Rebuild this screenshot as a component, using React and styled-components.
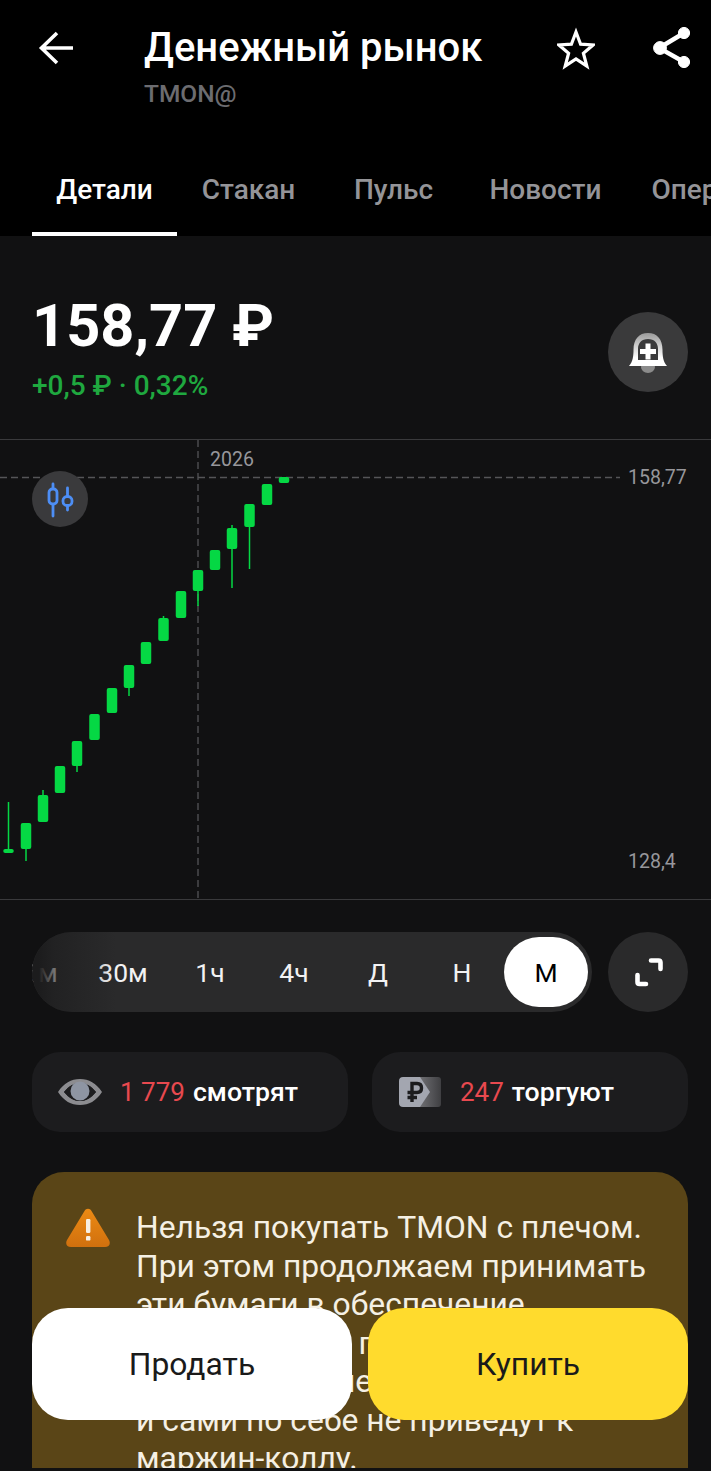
import React from 'react';
import styled, { createGlobalStyle } from 'styled-components';

const GlobalStyle = createGlobalStyle`
  html, body {
    margin: 0;
    padding: 0;
    background: #111112;
  }
  * {
    box-sizing: border-box;
  }
`;

const Root = styled.div`
  position: relative;
  width: 711px;
  height: 1471px;
  overflow: hidden;
  background: #111112;
  color: #fff;
  font-family: Roboto, 'Noto Sans', sans-serif;
`;

const Scroll = styled.div`
  height: 1468px;
  overflow: hidden;
`;

const Header = styled.header`
  height: 236px;
  background: #000;
  display: flex;
  flex-direction: column;
  justify-content: space-between;
`;

const TopBar = styled.div`
  display: flex;
  padding: 26px 20px 0 0;
`;

const BackButton = styled.div`
  width: 144px;
  height: 44px;
  flex-shrink: 0;
  svg {
    display: block;
    margin-left: 38px;
  }
`;

const TitleBlock = styled.div`
  flex: 1;
`;

const Title = styled.h1`
  margin: 0;
  font-size: 40px;
  line-height: 44px;
  font-weight: 500;
  white-space: nowrap;
`;

const Ticker = styled.div`
  margin-top: 8px;
  font-size: 24.5px;
  line-height: 32px;
  font-weight: 500;
  color: #6c6c70;
`;

const Actions = styled.div`
  display: flex;
  gap: 58px;
  align-items: flex-start;
`;

const Tabs = styled.nav`
  display: flex;
  padding-left: 32px;
  overflow: hidden;
`;

const Tab = styled.div`
  flex-shrink: 0;
  width: ${({ $width }) => $width}px;
  height: 90px;
  display: flex;
  align-items: center;
  justify-content: center;
  font-size: 28px;
  font-weight: 500;
  color: ${({ $active }) => ($active ? '#fff' : '#949498')};
  border-bottom: 4px solid ${({ $active }) => ($active ? '#fff' : 'transparent')};
`;

const PriceRow = styled.section`
  height: 203px;
  padding: 58px 23px 0 32px;
  display: flex;
  justify-content: space-between;
  align-items: flex-start;
`;

const Price = styled.div`
  font-size: 59.5px;
  line-height: 64px;
  font-weight: 700;
  white-space: nowrap;
`;

const Delta = styled.div`
  margin-top: 10px;
  font-size: 28px;
  line-height: 36px;
  font-weight: 500;
  color: #1fa83f;
  white-space: nowrap;
`;

const RoundButton = styled.div`
  width: ${({ $size }) => $size || 80}px;
  height: ${({ $size }) => $size || 80}px;
  border-radius: 50%;
  flex-shrink: 0;
  background: ${({ $bg }) => $bg || '#2a2a2b'};
  display: flex;
  align-items: center;
  justify-content: center;
`;

const BellSlot = styled.div`
  margin-top: 18px;
`;

const Chart = styled.section`
  position: relative;
  height: 461px;
  border-top: 1px solid #3a3a3c;
  border-bottom: 1px solid #3a3a3c;
  svg {
    display: block;
  }
`;

const ChartLabel = styled.div`
  position: absolute;
  left: ${({ $x }) => $x}px;
  top: ${({ $y }) => $y}px;
  font-size: 19.5px;
  line-height: 24px;
  color: #97979b;
`;

const ChartToggle = styled.div`
  position: absolute;
  left: 32px;
  top: 31px;
`;

const PeriodRow = styled.div`
  display: flex;
  gap: 16px;
  margin: 32px 23px 0 32px;
`;

const PeriodBar = styled.div`
  position: relative;
  flex: 1;
  height: 80px;
  padding: 5px 4px;
  border-radius: 40px;
  background: #2a2a2b;
  display: flex;
  justify-content: flex-end;
  overflow: hidden;
  &::before {
    content: '';
    position: absolute;
    left: 0;
    top: 0;
    bottom: 0;
    width: 84px;
    background: linear-gradient(
      90deg,
      #1c1c1d 8%,
      rgba(28, 28, 29, 0.6) 26%,
      rgba(42, 42, 43, 0)
    );
  }
`;

const Period = styled.div`
  flex-shrink: 0;
  width: ${({ $width }) => $width || 84}px;
  height: 70px;
  border-radius: 35px;
  display: flex;
  align-items: center;
  justify-content: center;
  font-size: 26.5px;
  color: ${({ $active }) => ($active ? '#000' : '#f2f2f3')};
  background: ${({ $active }) => ($active ? '#fff' : 'transparent')};
`;

const Stats = styled.div`
  display: grid;
  grid-template-columns: 316px 316px;
  gap: 24px;
  margin: 40px 0 0 32px;
`;

const Stat = styled.div`
  height: 80px;
  border-radius: 28px;
  background: #1c1c1e;
  display: flex;
  align-items: center;
  padding-left: ${({ $pad }) => $pad}px;
  gap: ${({ $gap }) => $gap}px;
  font-size: 26.7px;
  font-weight: 500;
  white-space: nowrap;
`;

const StatValue = styled.span`
  font-size: 26px;
  font-weight: 400;
  color: #e8494f;
  margin-right: 8px;
`;

const Warning = styled.div`
  margin: 40px 23px 0 32px;
  height: 400px;
  border-radius: 32px;
  background: #5a4517;
  padding: 36px 0 0 34px;
  display: flex;
  gap: 26px;
  align-items: flex-start;
`;

const WarningText = styled.p`
  margin: 0;
  font-size: 31.8px;
  line-height: 38.5px;
  color: #f5f0e4;
  white-space: nowrap;
`;

const Footer = styled.div`
  position: absolute;
  left: 32px;
  top: 1308px;
  width: 656px;
  display: grid;
  grid-template-columns: 320px 320px;
  gap: 16px;
`;

const TradeButton = styled.div`
  height: 112px;
  border-radius: 36px;
  background: ${({ $bg }) => $bg};
  color: #1a1a1a;
  display: flex;
  align-items: center;
  justify-content: center;
  font-size: 31.8px;
`;

// x, open/close top and bottom, wick top and bottom (page coords)
const candles = [
  [8.5, 849, 853, 802, 853],
  [26, 823, 849, 823, 861],
  [43, 795, 822, 790, 822],
  [60, 766, 793, 766, 793],
  [77, 741, 766, 741, 772],
  [94.5, 714, 740, 714, 740],
  [112, 688, 713, 688, 713],
  [129, 665, 688, 665, 696],
  [146, 642, 664, 642, 664],
  [163.5, 618, 641, 616, 641],
  [181, 591, 618, 591, 618],
  [198, 570, 591, 570, 606],
  [215, 550, 570, 550, 570],
  [232, 528, 549, 525, 588],
  [249.5, 504, 527, 504, 569],
  [267, 484, 505, 484, 505],
  [284, 477, 483, 477, 483],
];

const CHART_TOP = 440;

const CandleChart = () => (
  <svg width="711" height="459" viewBox={`0 ${CHART_TOP} 711 459`}>
    <line x1="0" x2="620" y1="477.5" y2="477.5" stroke="#555557" strokeWidth="1.3" strokeDasharray="7 4" />
    <line x1="198" x2="198" y1="440" y2="899" stroke="#555557" strokeWidth="1.3" strokeDasharray="7 4" />
    {candles.map(([x, top, bottom, wickTop, wickBottom]) => (
      <g key={x} fill="#05d844">
        <rect x={x - 0.75} y={wickTop} width="1.5" height={wickBottom - wickTop} />
        <rect x={x - 5.25} y={top} width="10.5" height={bottom - top} rx="2" />
      </g>
    ))}
  </svg>
);

const ArrowIcon = () => (
  <svg width="38" height="44" viewBox="0 0 38 44" fill="none" stroke="#fff" strokeWidth="3.6">
    <path d="M3 22H35M19 7L3.5 22L19 37" />
  </svg>
);

const StarIcon = () => (
  <svg width="38" height="44" viewBox="0 0 38 44" fill="none" stroke="#fff" strokeWidth="3.2">
    <path d="M19 6L23.6 18.2L36 19L26.4 27.2L29.8 40L19 32.8L8.2 40L11.6 27.2L2 19L14.4 18.2Z" />
  </svg>
);

const ShareIcon = () => (
  <svg width="38" height="44" viewBox="0 0 38 44" fill="#fff" stroke="#fff">
    <path d="M31 7L6 22L31 36" fill="none" strokeWidth="4.4" />
    <circle cx="31" cy="7" r="5.6" />
    <circle cx="7" cy="22" r="6.4" />
    <circle cx="31" cy="36" r="5.6" />
  </svg>
);

const BellIcon = () => (
  <svg width="80" height="80" viewBox="0 0 80 80">
    <defs>
      <linearGradient id="bell" x1="0" y1="0" x2="0" y2="1">
        <stop offset="0" stopColor="#9a9a9a" />
        <stop offset="0.75" stopColor="#fff" />
      </linearGradient>
    </defs>
    <ellipse cx="40" cy="55" rx="7" ry="6" fill="#8b8b8b" />
    <path
      fillRule="evenodd"
      fill="url(#bell)"
      d="M21 54C25 50 25.500 43 25.500 38C25.500 27 31 21 40 21C49 21 54.500 27 54.500 38C54.500 43 55 50 59 54ZM30 48H50V37C50 31 46.500 27 40 27C33.500 27 30 31 30 37Z"
    />
    <path fill="#fff" d="M37.500 31.500H42.500V37H48V42H42.500V47.500H37.500V42H32V37H37.500Z" />
  </svg>
);

const CandlesIcon = () => (
  <svg width="56" height="56" viewBox="0 0 56 56" fill="#3a3a3c" stroke="#4d8ef5" strokeWidth="2.8" strokeLinecap="round">
    <path d="M21 13V45M35.500 17V39" />
    <rect x="17" y="18" width="8" height="15" rx="3.500" />
    <rect x="31" y="25.500" width="9" height="9" rx="4" />
  </svg>
);

const ExpandIcon = () => (
  <svg width="80" height="80" viewBox="0 0 80 80" fill="none" stroke="#fff" strokeWidth="4.6" strokeLinecap="round" strokeLinejoin="round">
    <path d="M43 28.500H50.500C52 28.500 52.500 29 52.500 30.500V37" />
    <path d="M29.500 43V50C29.500 51.500 30 52 31.500 52H38" />
  </svg>
);

const EyeIcon = () => (
  <svg width="44" height="28" viewBox="0 0 44 28">
    <path
      fill="#8c8c90"
      fillRule="evenodd"
      d="M0 14C6 5 13 1 22 1C31 1 38 5 44 14C38 23 31 27 22 27C13 27 6 23 0 14ZM6 14C11 20 16 23 22 23C28 23 33 20 38 14C33 8 28 5 22 5C16 5 11 8 6 14Z"
    />
    <path fill="#1c1c1e" d="M6 14C11 8 16 5 22 5C28 5 33 8 38 14C33 20 28 23 22 23C16 23 11 20 6 14Z" />
    <circle cx="22" cy="13" r="9.500" fill="#8e95a3" />
  </svg>
);

const TraderIcon = () => (
  <svg width="42" height="30" viewBox="0 0 42 30">
    <defs>
      <linearGradient id="trader" x1="0" y1="0" x2="1" y2="0">
        <stop offset="0" stopColor="#7a7a7e" />
        <stop offset="1" stopColor="#3f3f42" />
      </linearGradient>
    </defs>
    <path fill="url(#trader)" d="M16 0H39C41 0 42 1 42 3V27C42 29 41 30 39 30H16Z" />
    <path fill="#a3a6b0" d="M4 0H21L31 15L21 30H4C1.500 30 0 28.500 0 26V4C0 1.500 1.500 0 4 0Z" />
    <path
      fill="none"
      stroke="#1c1c1e"
      strokeWidth="3.4"
      d="M13 25V6.500H18C21 6.500 22.500 8.500 22.500 11C22.500 13.500 21 15.500 18 15.500H8.500M8.500 20.500H18"
    />
  </svg>
);

const AlertIcon = () => (
  <svg width="44" height="40" viewBox="0 0 44 40" style={{ flexShrink: 0 }}>
    <defs>
      <linearGradient id="alert" x1="0" y1="0" x2="0" y2="1">
        <stop offset="0" stopColor="#ec8a14" />
        <stop offset="1" stopColor="#d0700e" />
      </linearGradient>
    </defs>
    <path fill="url(#alert)" d="M18.500 3C20 0 24 0 25.500 3L43 32C45 36 43 39 39 39H5C1 39 -1 36 1 32Z" />
    <rect x="20" y="11" width="4.400" height="14" rx="1.200" fill="#f7efe3" />
    <rect x="20" y="28" width="4.400" height="4.600" rx="1.200" fill="#f7efe3" />
  </svg>
);

const tabs = [
  { label: 'Детали', width: 145, active: true },
  { label: 'Стакан', width: 143 },
  { label: 'Пульс', width: 147 },
  { label: 'Новости', width: 157 },
  { label: 'Операции', width: 185 },
];

const periods = [
  { label: '15м', width: 90 },
  { label: '30м', width: 90 },
  { label: '1ч' },
  { label: '4ч' },
  { label: 'Д' },
  { label: 'Н' },
  { label: 'М', active: true },
];

const App = () => (
  <Root>
    <GlobalStyle />
    <Scroll>
      <Header>
        <TopBar>
          <BackButton>
            <ArrowIcon />
          </BackButton>
          <TitleBlock>
            <Title>Денежный рынок</Title>
            <Ticker>TMON@</Ticker>
          </TitleBlock>
          <Actions>
            <StarIcon />
            <ShareIcon />
          </Actions>
        </TopBar>
        <Tabs>
          {tabs.map((tab) => (
            <Tab key={tab.label} $width={tab.width} $active={tab.active}>
              {tab.label}
            </Tab>
          ))}
        </Tabs>
      </Header>

      <PriceRow>
        <div>
          <Price>158,77 ₽</Price>
          <Delta>+0,5 ₽ · 0,32%</Delta>
        </div>
        <BellSlot>
          <RoundButton $bg="#3a3a3b">
            <BellIcon />
          </RoundButton>
        </BellSlot>
      </PriceRow>

      <Chart>
        <CandleChart />
        <ChartLabel $x={210} $y={8}>2026</ChartLabel>
        <ChartLabel $x={628} $y={26}>158,77</ChartLabel>
        <ChartLabel $x={628} $y={410}>128,4</ChartLabel>
        <ChartToggle>
          <RoundButton $size={56} $bg="#3a3a3c">
            <CandlesIcon />
          </RoundButton>
        </ChartToggle>
      </Chart>

      <PeriodRow>
        <PeriodBar>
          {periods.map((period) => (
            <Period key={period.label} $width={period.width} $active={period.active}>
              {period.label}
            </Period>
          ))}
        </PeriodBar>
        <RoundButton>
          <ExpandIcon />
        </RoundButton>
      </PeriodRow>

      <Stats>
        <Stat $pad={26} $gap={18}>
          <EyeIcon />
          <span>
            <StatValue>1 779</StatValue>
            смотрят
          </span>
        </Stat>
        <Stat $pad={27} $gap={19}>
          <TraderIcon />
          <span>
            <StatValue>247</StatValue>
            торгуют
          </span>
        </Stat>
      </Stats>

      <Warning>
        <AlertIcon />
        <WarningText>
          Нельзя покупать TMON с плечом.
          <br />
          При этом продолжаем принимать
          <br />
          эти бумаги в обеспечение.
          <br />
          Текущие цены продолжат
          <br />
          остаётся в силе
          <br />
          и сами по себе не приведут к
          <br />
          маржин-коллу.
        </WarningText>
      </Warning>
    </Scroll>

    <Footer>
      <TradeButton $bg="#fff">Продать</TradeButton>
      <TradeButton $bg="#ffdb2d">Купить</TradeButton>
    </Footer>
  </Root>
);

export default App;
